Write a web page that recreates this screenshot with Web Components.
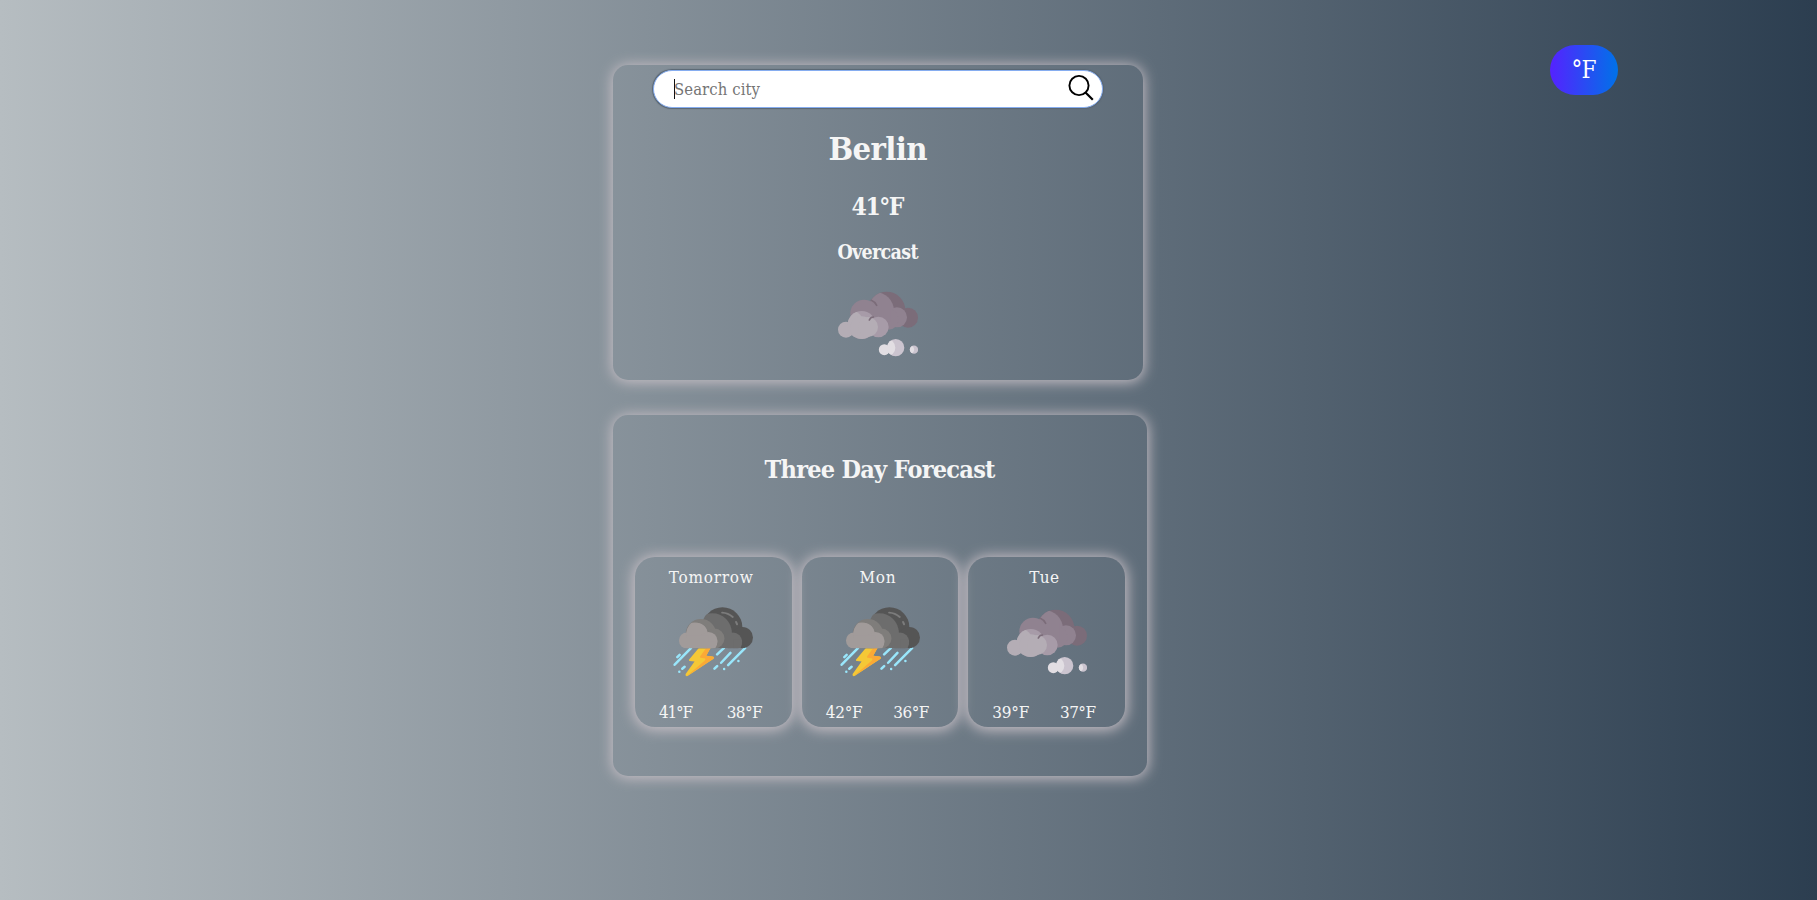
<!DOCTYPE html>
<html lang="en"><head><meta charset="utf-8"><title>Weather</title>
<style>
body{margin:0;font-family:"DejaVu Serif Condensed","DejaVu Serif",serif;color:#f5f5f5}
</style></head><body><weather-app></weather-app>
<script>
const define=(name,html,setup)=>customElements.define(name,class extends HTMLElement{
  connectedCallback(){
    if(!this.shadowRoot){this.attachShadow({mode:'open'}).innerHTML=html;}
    if(setup)setup(this);
  }
});
/* One line of text, tracked to a given width */
define('text-line',`<style>:host{display:block;white-space:nowrap;font-stretch:condensed}span{display:inline-block}</style><span><slot></slot></span>`,el=>{
  const s=el.shadowRoot.querySelector('span'),w=+el.getAttribute('width'),n=el.textContent.length;
  const nat=s.getBoundingClientRect().width;
  const d=(w-nat)/(n-1);
  s.style.letterSpacing=d+'px';
  s.style.marginRight=-d+'px';
});
define('overcast-icon',`<style>:host{display:block;width:80px;height:80px}svg{display:block}</style>
<svg width="80" height="80" viewBox="174 162 240 240">
<defs><clipPath id="a"><circle cx="320" cy="241" r="56"/></clipPath><clipPath id="b"><circle cx="245" cy="285" r="42"/></clipPath><clipPath id="c"><circle cx="347" cy="353" r="26"/></clipPath><clipPath id="d"><circle cx="402" cy="359" r="12.5"/></clipPath></defs>
<circle cx="320" cy="241" r="56" fill="#7b6c79"/><circle cx="384" cy="263" r="30" fill="#7b6c79"/>
<g fill="#908290"><circle cx="285" cy="243" r="57" clip-path="url(#a)"/><circle cx="252" cy="250" r="41"/><circle cx="351" cy="262" r="30"/><circle cx="325" cy="268" r="31"/><path d="M252 225h80v50h-80z"/></g>
<path d="M274 211q10 4 16 15" fill="none" stroke="#7b6c79" stroke-width="5" stroke-linecap="round"/>
<circle cx="245" cy="285" r="42" fill="#a79ba8"/><circle cx="295" cy="291" r="31" fill="#a79ba8"/>
<g fill="#b4adb5"><circle cx="198" cy="299" r="24"/><circle cx="210" cy="282" r="41" clip-path="url(#b)"/><circle cx="245" cy="293" r="34"/><circle cx="264" cy="291" r="30"/></g>
<path d="M268 270q3-8 12-9" fill="none" stroke="#7b6c79" stroke-width="5" stroke-linecap="round"/>
<circle cx="347" cy="353" r="26" fill="#cbc4cf"/><circle cx="313" cy="359" r="16.500" fill="#e2dee3"/><circle cx="320" cy="353" r="26" fill="#e2dee3" clip-path="url(#c)"/>
<circle cx="402" cy="359" r="12.500" fill="#cbc4cf"/><circle cx="390" cy="359" r="12.500" fill="#e2dee3" clip-path="url(#d)"/>
</svg>`);
define('storm-icon',`<style>:host{display:block;width:80px;height:80px}svg{display:block}</style>
<svg width="80" height="80" viewBox="158 186 241 241">
<defs><clipPath id="a"><path d="M158 186h241v139H158z"/></clipPath><clipPath id="m"><circle cx="306" cy="263" r="62"/></clipPath><clipPath id="f"><circle cx="242" cy="279" r="42"/></clipPath></defs>
<g stroke="#99e6fb" stroke-width="7.500" stroke-linecap="round"><path d="M212 325l-49 50M178 345l-7 7M193 381l-7 6M177 396h.1M311 325l-20 19M331 339l-28 30M375 325l-51 51M291 379l-8 8M312 388h.1M355 364h.1"/></g>
<path d="M237 323L206 360Q205 364 209 364L223 365L196 403Q194 411 202 409L280 357Q283 351 277 350L258 348L272 323Z" fill="#f5c836"/>
<path d="M259 323L239 351Q239 354 242 354L255 356Q257 358 254 362L200 409L280 357Q283 351 277 350L258 348L272 323Z" fill="#fba936"/>
<g clip-path="url(#a)"><g fill="#555"><circle cx="307" cy="262" r="60"/><circle cx="367" cy="293" r="32"/></g>
<g fill="#6d6d6d"><circle cx="277" cy="278" r="58" clip-path="url(#m)"/><circle cx="339" cy="305" r="27"/><path d="M275 270h59v55h-59z"/><path d="M339 325h23q5-10 4-25h-27z"/></g>
<g fill="#7f7d7b"><circle cx="242" cy="283" r="46"/><circle cx="283" cy="296" r="30"/><path d="M210 300h79v26h-79z"/></g>
<g fill="#a19b9a"><circle cx="200" cy="302" r="24"/><circle cx="224" cy="287" r="39" clip-path="url(#f)"/><circle cx="230" cy="281" r="32"/><circle cx="265" cy="303" r="27"/><path d="M200 286h65v40h-65zM265 326h20q7-10 7-22h-27z"/></g></g>
<g stroke="#7c7c7c" stroke-width="6" stroke-linecap="round" fill="none"><path d="M306 218q18 1 32 13M348 246l3 7"/></g>
</svg>`);
define('glow-panel',`<style>:host{display:flex;flex-direction:column;align-items:center;box-sizing:border-box;border-radius:15px;box-shadow:0 1px 14px 1px #c9c1c7}</style><slot></slot>`);
define('search-box',`<style>:host{display:flex;box-sizing:border-box;width:450px;height:38px;border:1px solid #86adf0;border-radius:20px;background:#fff;box-shadow:0 0 1px 1px #596673;color:#757575;align-items:center;padding:0 8px 0 20px;font-size:16.500px;line-height:20px;font-weight:400}
i{width:1px;height:20px;background:#111;margin-right:-1px}text-line{margin-top:2px}svg{margin-left:auto;margin-top:-4px}</style>
<i></i><text-line width="86">Search city</text-line><svg width="27" height="27" viewBox="0 0 27 27" fill="none" stroke="#000" stroke-width="1.900"><circle cx="12" cy="11.500" r="9.600"/><path d="M18.500 18.500l7.300 7.200" stroke-width="2.200"/></svg>`);
define('day-card',`<style>:host{display:flex;flex-direction:column;align-items:center;box-sizing:border-box;flex:1;height:170px;border-radius:20px;box-shadow:0 1px 14px 2px #c9c1c7;padding-top:10px;font-size:17px;line-height:21px}
.t{display:flex;align-self:stretch;box-sizing:border-box;margin-top:20px;padding:0 29px 0 24px;justify-content:space-between}
::slotted([slot=day]){margin-right:5px}
::slotted([slot=icon]){margin-top:14px}</style><slot name="day"></slot><slot name="icon"></slot><div class="t"><slot name="high"></slot><slot name="low"></slot></div>`);
define('unit-toggle',`<style>:host{display:flex;width:68px;height:50px;border-radius:25px;background:linear-gradient(to right,#5522ff,#0072e8);align-items:center;justify-content:center;color:#fff;font-size:24px;line-height:30px}</style><slot></slot>`);
define('weather-app',`<style>
:host{display:flex;height:900px;box-sizing:border-box;padding:65px 199px 0 613px;justify-content:space-between;align-items:flex-start;overflow:hidden;
background:linear-gradient(to right,#b6bdc1,#2c3e50)}
main{display:flex;flex-direction:column;gap:35px;font-weight:700}
.now{width:530px;height:315px;padding-top:5px}
.fc{width:534px;height:361px;padding-top:40px}
.city{font-size:32.500px;line-height:40px;margin-top:21px}
.temp{font-size:24.500px;line-height:30px;margin-top:23px}
.cond{font-size:19.500px;line-height:24px;margin-top:19px}
.now overcast-icon{margin-top:19px}
h2{margin:0;font-size:25px;line-height:30px}
.days{display:flex;gap:10px;width:490px;margin-top:72px;font-weight:400}
unit-toggle{margin-top:-20px}
</style>
<main><glow-panel class="now"><search-box></search-box>
<text-line class="city" width="99">Berlin</text-line><text-line class="temp" width="53">41°F</text-line><text-line class="cond" width="81">Overcast</text-line><overcast-icon></overcast-icon></glow-panel>
<glow-panel class="fc"><h2><text-line width="231">Three Day Forecast</text-line></h2>
<div class="days">
<day-card><text-line slot="day" width="84">Tomorrow</text-line><storm-icon slot="icon"></storm-icon><text-line slot="high" width="34">41°F</text-line><text-line slot="low" width="36">38°F</text-line></day-card>
<day-card><text-line slot="day" width="36">Mon</text-line><storm-icon slot="icon"></storm-icon><text-line slot="high" width="37">42°F</text-line><text-line slot="low" width="36">36°F</text-line></day-card>
<day-card><text-line slot="day" width="30">Tue</text-line><overcast-icon slot="icon"></overcast-icon><text-line slot="high" width="37">39°F</text-line><text-line slot="low" width="36">37°F</text-line></day-card>
</div></glow-panel></main>
<unit-toggle><text-line width="25">°F</text-line></unit-toggle>`);
</script></body></html>
